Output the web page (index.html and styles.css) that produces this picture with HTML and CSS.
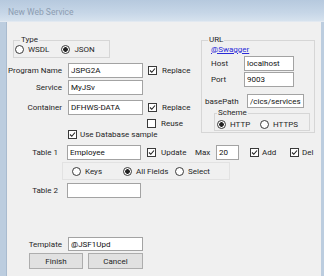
FILE: index.html
```html
<!DOCTYPE html>
<html lang="en">
<head>
    <meta charset="UTF-8">
    <title>New Web Service</title>
    <link rel="stylesheet" href="styles.css">
</head>
<body>
    <div class="window">
        <div class="titlebar">New Web Service</div>

        <div class="client">
            <div class="top">
                <div class="left">
                    <fieldset class="group type-group">
                        <legend>Type</legend>
                        <div class="opts">
                            <span class="opt"><span class="rb"></span>WSDL</span>
                            <span class="opt"><span class="rb on"></span>JSON</span>
                        </div>
                    </fieldset>

                    <div class="row row-prog">
                        <span class="lbl">Program Name</span>
                        <input class="tb" type="text" value="JSPG2A">
                        <span class="cb on"><svg viewBox="0 0 7 7"><polyline points="1,3.5 2.8,5.3 6,1.5"/></svg></span>
                        <span class="txt">Replace</span>
                    </div>

                    <div class="row row-service">
                        <span class="lbl">Service</span>
                        <input class="tb" type="text" value="MyJSv">
                    </div>

                    <div class="row row-container">
                        <span class="lbl">Container</span>
                        <input class="tb" type="text" value="DFHWS-DATA">
                        <span class="cb on"><svg viewBox="0 0 7 7"><polyline points="1,3.5 2.8,5.3 6,1.5"/></svg></span>
                        <span class="txt">Replace</span>
                    </div>

                    <div class="row row-reuse">
                        <span class="cb"></span>
                        <span class="txt">Reuse</span>
                    </div>

                    <div class="row row-usedb">
                        <span class="cb on"><svg viewBox="0 0 7 7"><polyline points="1,3.5 2.8,5.3 6,1.5"/></svg></span>
                        <span class="txt-s">Use Database sample</span>
                    </div>
                </div>

                <fieldset class="group url-group">
                    <legend>URL</legend>
                    <a class="swagger" href="#">@Swagger</a>
                    <div class="url-row row-host">
                        <span class="url-lbl">Host</span>
                        <input class="tb tb-url" type="text" value="localhost">
                    </div>
                    <div class="url-row row-port">
                        <span class="url-lbl">Port</span>
                        <input class="tb tb-url" type="text" value="9003">
                    </div>
                    <div class="base-row">
                        <span class="base-lbl">basePath</span>
                        <input class="tb tb-base" type="text" value="/cics/services">
                    </div>
                    <fieldset class="group scheme-group">
                        <legend>Scheme</legend>
                        <div class="opts">
                            <span class="opt opt-http"><span class="rb on"></span>HTTP</span>
                            <span class="opt"><span class="rb"></span>HTTPS</span>
                        </div>
                    </fieldset>
                </fieldset>
            </div>

            <div class="row row-table1">
                <span class="lbl lbl-s">Table 1</span>
                <input class="tb tb-s" type="text" value="Employee">
                <span class="cb cb-update on"><svg viewBox="0 0 7 7"><polyline points="1,3.5 2.8,5.3 6,1.5"/></svg></span>
                <span class="txt w-update">Update</span>
                <span class="w-max">Max</span>
                <input class="tb tb-max" type="text" value="20">
                <span class="cb cb-add on"><svg viewBox="0 0 7 7"><polyline points="1,3.5 2.8,5.3 6,1.5"/></svg></span>
                <span class="txt-s w-add">Add</span>
                <span class="cb on"><svg viewBox="0 0 7 7"><polyline points="1,3.5 2.8,5.3 6,1.5"/></svg></span>
                <span class="txt-s">Del</span>
            </div>

            <div class="fields-group">
                <span class="opt w-keys"><span class="rb"></span>Keys</span>
                <span class="opt w-all"><span class="rb on"></span>All Fields</span>
                <span class="opt"><span class="rb"></span>Select</span>
            </div>

            <div class="row row-table2">
                <span class="lbl lbl-s">Table 2</span>
                <input class="tb tb-s" type="text" value="">
            </div>

            <div class="row row-template">
                <span class="lbl">Template</span>
                <input class="tb tb-template" type="text" value="@JSF1Upd">
            </div>

            <div class="buttons">
                <button class="btn btn-finish">Finish</button>
                <button class="btn btn-cancel">Cancel</button>
            </div>
        </div>
    </div>
</body>
</html>
```

FILE: styles.css
```css
* {
    margin: 0;
    padding: 0;
    box-sizing: border-box;
}

body {
    font-family: Roboto, "Liberation Sans", Arial, sans-serif;
    font-size: 8px;
    color: #262626;
    background: #f0f0f0;
}

.window {
    width: 324px;
    height: 276px;
    background: #bccddf;
    display: flex;
    flex-direction: column;
    overflow: hidden;
}

.titlebar {
    height: 22px;
    padding: 3px 0 0 8px;
    line-height: 19px;
    font-size: 8.5px;
    color: #8c9cb1;
    background: linear-gradient(to bottom, #b6c9de 0%, #c6d6e7 60%, #d6e2ee 100%);
    border-bottom: 1px solid #e2e9f1;
}

.client {
    flex: 1;
    margin: 0 3px 0 6px;
    border-left: 1px solid #a9bbcf;
    background: #f0f0f0;
}

/* group boxes */

.group {
    border: 1px solid #d6d6d6;
    min-width: 0;
}

.group legend {
    line-height: 10px;
    padding: 0 1px;
}

.opts {
    display: flex;
    align-items: center;
    height: 9px;
}

.opt {
    display: flex;
    align-items: center;
    gap: 4px;
    white-space: nowrap;
}

.rb {
    display: inline-block;
    width: 9px;
    height: 9px;
    border: 1px solid #3a3a3a;
    border-radius: 50%;
    background: #fff;
    flex: none;
}

.rb.on {
    background: radial-gradient(circle, #222 0 2px, #fff 2.6px);
}

.cb {
    display: inline-flex;
    width: 9px;
    height: 9px;
    border: 1px solid #3a3a3a;
    background: #fff;
    flex: none;
}

.cb svg {
    width: 7px;
    height: 7px;
}

.cb polyline {
    fill: none;
    stroke: #222;
    stroke-width: 1.1;
}

/* top area */

.top {
    display: flex;
    align-items: flex-start;
    margin-top: 13px;
}

.left {
    width: 194px;
}

.type-group {
    margin-left: 6px;
    width: 97px;
    padding: 0 0 3px 1px;
}

.type-group legend {
    margin-left: 5px;
}

.type-group .opts {
    gap: 12px;
}

.row {
    display: flex;
    align-items: center;
    height: 15px;
}

.lbl {
    width: 55px;
    margin-right: 6px;
    text-align: right;
    white-space: nowrap;
}

.lbl-s {
    width: 51px;
    margin-right: 9px;
}

.tb {
    width: 75px;
    height: 15px;
    border: 1px solid #a3a3a3;
    background: #fff;
    padding: 0 2px;
    font-family: inherit;
    font-size: 8px;
    color: #111;
    outline: none;
}

.row .cb {
    margin-left: 5px;
}

.txt {
    margin-left: 5px;
    white-space: nowrap;
}

.txt-s {
    margin-left: 3px;
    white-space: nowrap;
}

.row-prog {
    margin-top: 5px;
}

.row-service {
    margin-top: 2px;
}

.row-container {
    margin-top: 5px;
}

.row-reuse {
    margin-top: 4px;
    height: 9px;
}

.row-reuse .cb {
    margin-left: 140px;
}

.row-usedb {
    margin-top: 2px;
    height: 9px;
}

.row-usedb .cb {
    margin-left: 61px;
}

/* URL group */

.url-group {
    width: 114px;
    padding: 0 0 1px 3px;
}

.url-group > legend {
    margin-left: 3px;
}

.swagger {
    display: block;
    margin-left: 6px;
    height: 10px;
    line-height: 9px;
    color: #2a2ad8;
    text-decoration: underline;
}

.url-row {
    display: flex;
    align-items: center;
    margin: 1px 0 0 6px;
}

.url-lbl {
    width: 33px;
}

.tb-url {
    width: 50px;
}

.base-row {
    display: flex;
    align-items: center;
    margin-top: 7px;
}

.base-lbl {
    width: 42px;
}

.tb-base {
    width: 57px;
    height: 14px;
}

.scheme-group {
    margin-left: 9px;
    width: 96px;
    padding: 2px 0 1px 2px;
}

.scheme-group legend {
    margin-left: 0;
}

.opt-http {
    width: 43px;
}

/* lower rows */

.row-table1 {
    margin-top: 6px;
}

.tb-s {
    width: 74px;
}

.row .cb-update {
    margin-left: 6px;
}

.w-update {
    width: 34px;
}

.w-max {
    width: 21px;
}

.tb-max {
    width: 23px;
}

.row .cb-add {
    margin-left: 11px;
}

.w-add {
    width: 23px;
}

.fields-group {
    display: flex;
    align-items: center;
    margin: 2px 0 0 55px;
    width: 168px;
    height: 18px;
    padding-left: 9px;
    border: 1px solid #e2e2e2;
}

.w-keys {
    width: 51px;
}

.w-all {
    width: 52px;
}

.row-table2 {
    margin-top: 3px;
}

.row-template {
    margin-top: 39px;
    height: 14px;
}

.tb-template {
    height: 14px;
}

.buttons {
    display: flex;
    gap: 5px;
    margin: 2px 0 0 22px;
}

.btn {
    height: 16px;
    background: #e1e1e1;
    border: 1px solid #adadad;
    font-family: inherit;
    font-size: 8px;
    color: #1e1e1e;
}

.btn-finish {
    width: 54px;
}

.btn-cancel {
    width: 55px;
}
```
